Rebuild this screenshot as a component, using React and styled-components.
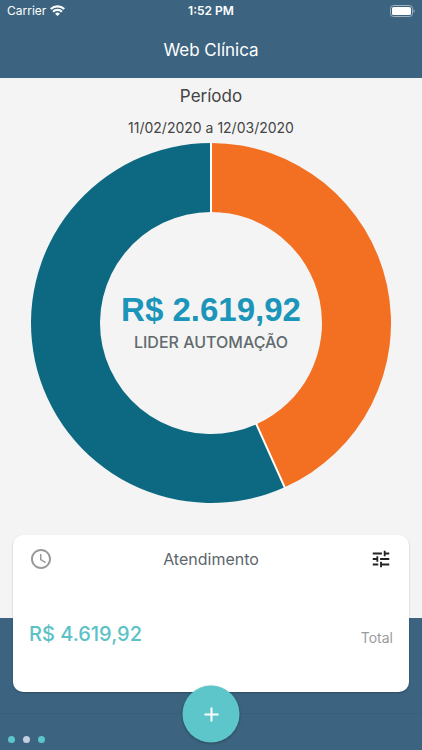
import React from 'react';
import styled, { createGlobalStyle } from 'styled-components';
import { MdAccessTime, MdAdd, MdTune } from 'react-icons/md';

const GlobalStyle = createGlobalStyle`
  * {
    box-sizing: border-box;
  }

  body {
    margin: 0;
    font-family: Inter, 'Liberation Sans', sans-serif;
    background: #3c6480;
  }

  h1, h2, p {
    margin: 0;
    font-weight: 400;
  }

  button {
    padding: 0;
    border: 0;
    background: none;
    cursor: pointer;
  }
`;

const Screen = styled.div`
  min-height: 100vh;
  display: flex;
  flex-direction: column;
  background: #f4f4f4;
`;

const Header = styled.header`
  background: #3c6480;
  color: #fff;
`;

const StatusBar = styled.div`
  height: 22px;
  padding: 0 7px 1px;
  display: grid;
  grid-template-columns: 1fr auto 1fr;
  align-items: center;
  font-size: 12px;
`;

const Carrier = styled.div`
  display: flex;
  align-items: center;
  gap: 4px;
`;

const Time = styled.time`
  font-weight: 600;
`;

const BatteryIcon = styled.svg`
  justify-self: end;
`;

const Title = styled.h1`
  height: 56px;
  font-size: 17px;
  line-height: 56px;
  text-align: center;
`;

const Main = styled.main`
  flex: 1;
  padding: 0 31px 115px;
`;

const Period = styled.section`
  color: #444;
  text-align: center;
`;

const PeriodTitle = styled.h2`
  font-size: 17px;
  line-height: 36px;
`;

const PeriodRange = styled.p`
  padding-bottom: 1px;
  font-size: 14px;
  line-height: 28px;
`;

const Chart = styled.div`
  display: grid;
  place-items: center;

  > * {
    grid-area: 1 / 1;
  }
`;

const Donut = styled.svg`
  display: block;
  width: 100%;
`;

const Summary = styled.div`
  padding-top: 2px;
  text-align: center;
`;

const SummaryValue = styled.p`
  color: #1b95b9;
  font-family: 'Liberation Sans', Arial, sans-serif;
  font-size: 33px;
  font-weight: 700;
  line-height: 36px;
`;

const SummaryLabel = styled.p`
  color: #616b6e;
  font-size: 16px;
  font-weight: 500;
  line-height: 28px;
`;

const Footer = styled.footer`
  padding: 0 13px;
  background: #3c6480;
`;

const Card = styled.section`
  height: 157px;
  margin-top: -83px;
  padding: 12px 16px 42px;
  display: flex;
  flex-direction: column;
  justify-content: space-between;
  border-radius: 10px;
  background: #fff;
  box-shadow: 0 1px 2px rgba(0, 0, 0, 0.25);
`;

const CardHeader = styled.div`
  display: grid;
  grid-template-columns: 24px 1fr 24px;
  align-items: center;
`;

const CardTitle = styled.h2`
  color: #5d666b;
  font-size: 16px;
  line-height: 24px;
  text-align: center;
`;

const IconButton = styled.button`
  height: 24px;
  display: grid;
  place-items: center;
  color: ${(props) => props.$color};
`;

const CardRow = styled.div`
  display: flex;
  align-items: center;
  justify-content: space-between;
`;

const CardValue = styled.p`
  color: #5dc2c6;
  font-size: 20px;
  font-weight: 500;
  line-height: 32px;
`;

const CardLabel = styled.p`
  padding-top: 6px;
  color: #9b9b9b;
  font-size: 14px;
`;

const BottomBar = styled.nav`
  position: relative;
  height: 37px;
  margin: 21px -13px 0;
  padding: 16px 8px 0;
  border-top: 1px solid #3a5f7b;
`;

const Dots = styled.div`
  display: flex;
  gap: 8px;
  padding-top: 6px;
`;

const Dot = styled.span`
  width: 7px;
  height: 7px;
  border-radius: 50%;
  background: ${(props) => (props.$active ? '#c5cfe0' : '#5dc6ca')};
`;

// Floats over the card and the bottom bar
const AddButton = styled.button`
  && {
    position: absolute;
    top: 0;
    left: 50%;
    width: 57px;
    height: 57px;
    display: grid;
    place-items: center;
    border-radius: 50%;
    background: #5dc6ca;
    color: #fff;
    transform: translate(-50%, -50%);
    box-shadow: 0 1px 3px rgba(0, 0, 0, 0.3);
  }
`;

const SLICES = [
  { name: 'Outros', value: 2000, color: '#f36f21' },
  { name: 'LIDER AUTOMAÇÃO', value: 2619.92, color: '#0d6981' },
];

function point(radius, angle) {
  return `${180 + radius * Math.sin(angle)} ${180 - radius * Math.cos(angle)}`;
}

function slicePath(start, end) {
  const large = end - start > Math.PI ? 1 : 0;
  return [
    `M ${point(180, start)}`,
    `A 180 180 0 ${large} 1 ${point(180, end)}`,
    `L ${point(111, end)}`,
    `A 111 111 0 ${large} 0 ${point(111, start)}`,
    'Z',
  ].join(' ');
}

function DonutChart() {
  const total = SLICES.reduce((sum, slice) => sum + slice.value, 0);
  let angle = 0;
  const slices = SLICES.map((slice) => {
    const start = angle;
    angle += (slice.value / total) * 2 * Math.PI;
    return { ...slice, start, end: angle };
  });

  return (
    <Donut viewBox="0 0 360 360" aria-hidden="true">
      {slices.map(({ name, color, start, end }) => (
        <path key={name} d={slicePath(start, end)} fill={color} />
      ))}
      {slices.map(({ name, start }) => (
        <path
          key={name}
          d={`M ${point(110, start)} L ${point(181, start)}`}
          stroke="#fff"
          strokeWidth="2"
        />
      ))}
    </Donut>
  );
}

function Wifi() {
  return (
    <svg width="15" height="11" viewBox="0 0 15 11" fill="none" stroke="#fff" strokeWidth="2.3">
      <path d="M0.8 4 a9.6 9.6 0 0 1 13.4 0" />
      <path d="M3.1 6.8 a6.2 6.2 0 0 1 8.8 0" />
      <path d="M7.5 11 L5.1 8.7 a3.5 3.5 0 0 1 4.8 0 Z" fill="#fff" stroke="none" />
    </svg>
  );
}

function Battery() {
  return (
    <BatteryIcon width="25" height="12" viewBox="0 0 25 12" fill="none">
      <rect x="0.5" y="0.5" width="22" height="11" rx="3" stroke="#9db1bf" />
      <rect x="2" y="2" width="19" height="8" rx="1.6" fill="#fff" />
      <path d="M23.6 4.2 a2 2 0 0 1 0 3.6 Z" fill="#9db1bf" />
    </BatteryIcon>
  );
}

function App() {
  return (
    <Screen>
      <GlobalStyle />
      <Header>
        <StatusBar>
          <Carrier>
            Carrier
            <Wifi />
          </Carrier>
          <Time>1:52 PM</Time>
          <Battery />
        </StatusBar>
        <Title>Web Clínica</Title>
      </Header>

      <Main>
        <Period>
          <PeriodTitle>Período</PeriodTitle>
          <PeriodRange>11/02/2020 a 12/03/2020</PeriodRange>
        </Period>
        <Chart>
          <DonutChart />
          <Summary>
            <SummaryValue>R$ 2.619,92</SummaryValue>
            <SummaryLabel>LIDER AUTOMAÇÃO</SummaryLabel>
          </Summary>
        </Chart>
      </Main>

      <Footer>
        <Card>
          <CardHeader>
            <IconButton type="button" $color="#999" aria-label="Histórico">
              <MdAccessTime size={24} />
            </IconButton>
            <CardTitle>Atendimento</CardTitle>
            <IconButton type="button" $color="#222" aria-label="Filtros">
              <MdTune size={22} />
            </IconButton>
          </CardHeader>
          <CardRow>
            <CardValue>R$ 4.619,92</CardValue>
            <CardLabel>Total</CardLabel>
          </CardRow>
        </Card>
        <BottomBar>
          <Dots>
            <Dot />
            <Dot $active />
            <Dot />
          </Dots>
          <AddButton type="button" aria-label="Adicionar">
            <MdAdd size={24} />
          </AddButton>
        </BottomBar>
      </Footer>
    </Screen>
  );
}

export default App;
